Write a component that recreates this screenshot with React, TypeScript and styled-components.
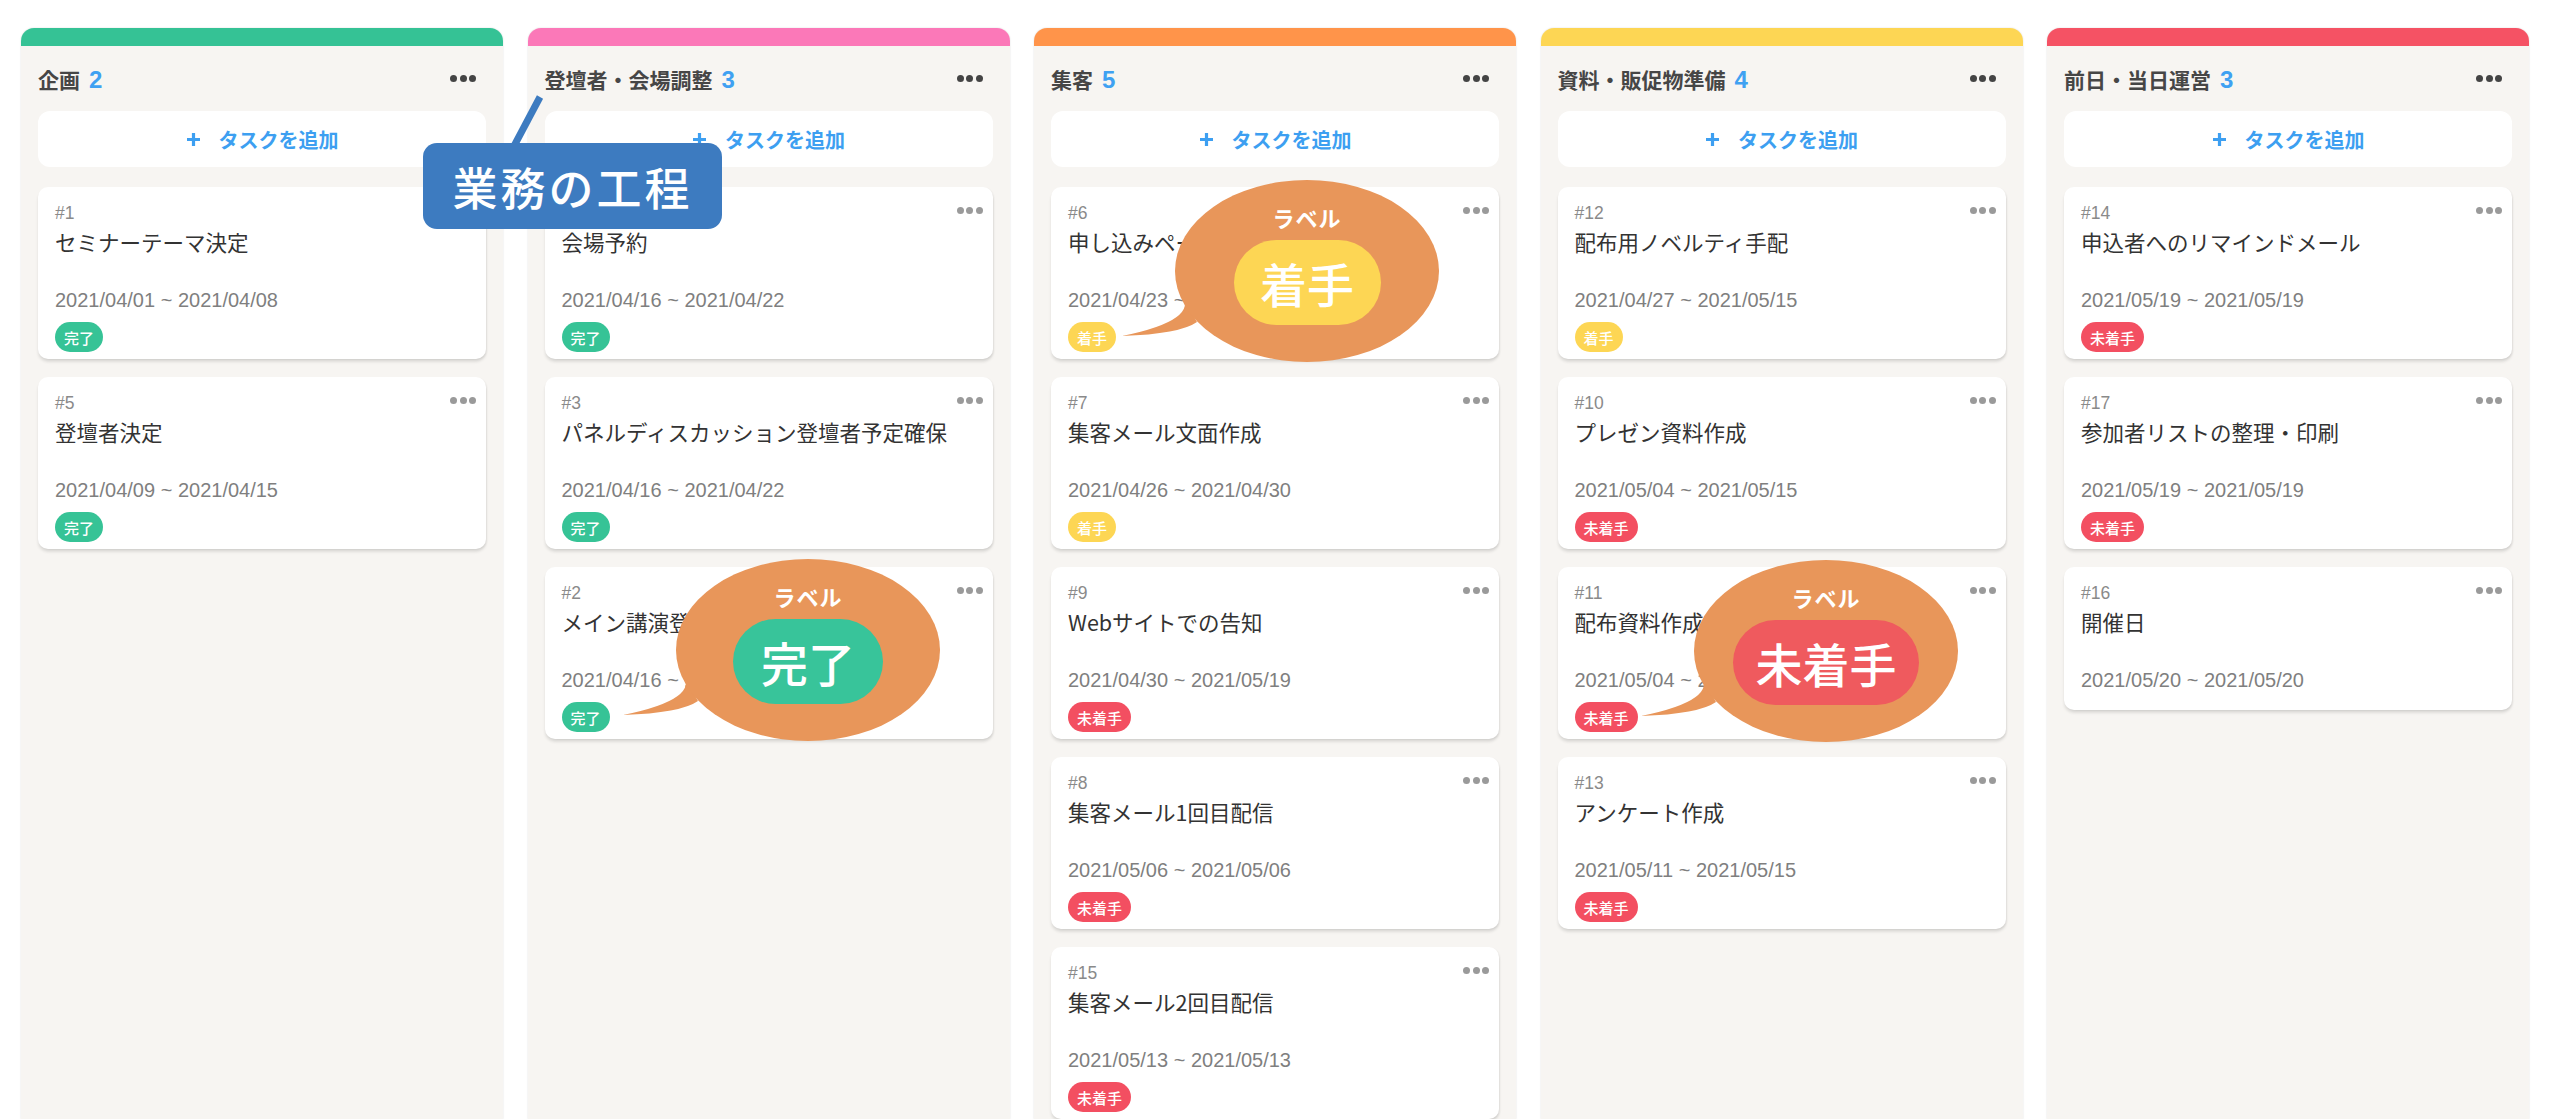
import styled, { createGlobalStyle } from "styled-components";

type Status = "done" | "doing" | "todo";

type Task = {
  no: number;
  title: string;
  date: string;
  status?: Status;
};

type Column = {
  title: string;
  color: string;
  tasks: Task[];
};

const statusColors: Record<Status, string> = {
  done: "#36c396",
  doing: "#fdd654",
  todo: "#f34f61",
};

const statusText: Record<Status, string> = {
  done: "完了",
  doing: "着手",
  todo: "未着手",
};

const columns: Column[] = [
  {
    title: "企画",
    color: "#35c295",
    tasks: [
      { no: 1, title: "セミナーテーマ決定", date: "2021/04/01 ~ 2021/04/08", status: "done" },
      { no: 5, title: "登壇者決定", date: "2021/04/09 ~ 2021/04/15", status: "done" },
    ],
  },
  {
    title: "登壇者・会場調整",
    color: "#fb78b8",
    tasks: [
      { no: 4, title: "会場予約", date: "2021/04/16 ~ 2021/04/22", status: "done" },
      { no: 3, title: "パネルディスカッション登壇者予定確保", date: "2021/04/16 ~ 2021/04/22", status: "done" },
      { no: 2, title: "メイン講演登壇者決定", date: "2021/04/16 ~ 2021/04/22", status: "done" },
    ],
  },
  {
    title: "集客",
    color: "#ff944a",
    tasks: [
      { no: 6, title: "申し込みページ作成", date: "2021/04/23 ~ 2021/04/29", status: "doing" },
      { no: 7, title: "集客メール文面作成", date: "2021/04/26 ~ 2021/04/30", status: "doing" },
      { no: 9, title: "Webサイトでの告知", date: "2021/04/30 ~ 2021/05/19", status: "todo" },
      { no: 8, title: "集客メール1回目配信", date: "2021/05/06 ~ 2021/05/06", status: "todo" },
      { no: 15, title: "集客メール2回目配信", date: "2021/05/13 ~ 2021/05/13", status: "todo" },
    ],
  },
  {
    title: "資料・販促物準備",
    color: "#fdd654",
    tasks: [
      { no: 12, title: "配布用ノベルティ手配", date: "2021/04/27 ~ 2021/05/15", status: "doing" },
      { no: 10, title: "プレゼン資料作成", date: "2021/05/04 ~ 2021/05/15", status: "todo" },
      { no: 11, title: "配布資料作成", date: "2021/05/04 ~ 2021/05/15", status: "todo" },
      { no: 13, title: "アンケート作成", date: "2021/05/11 ~ 2021/05/15", status: "todo" },
    ],
  },
  {
    title: "前日・当日運営",
    color: "#f55264",
    tasks: [
      { no: 14, title: "申込者へのリマインドメール", date: "2021/05/19 ~ 2021/05/19", status: "todo" },
      { no: 17, title: "参加者リストの整理・印刷", date: "2021/05/19 ~ 2021/05/19", status: "todo" },
      { no: 16, title: "開催日", date: "2021/05/20 ~ 2021/05/20" },
    ],
  },
];

const GlobalStyle = createGlobalStyle`
  html, body {
    margin: 0;
    padding: 0;
    background: #ffffff;
  }
  body {
    font-family: "Liberation Sans", "Noto Sans CJK JP", sans-serif;
    color: #333;
  }
  * {
    box-sizing: border-box;
  }
`;

const Page = styled.div`
  position: relative;
  width: 2550px;
  height: 1119px;
  overflow: hidden;
`;

const Board = styled.div`
  display: flex;
  gap: 24.5px;
  height: 100%;
  padding: 28px 19px 0 21px;
`;

const Lane = styled.section`
  flex: 0 0 482px;
  display: flex;
  flex-direction: column;
  background: #f7f5f2;
  border-radius: 13px 13px 0 0;
  box-shadow: 0 0 2px rgba(0, 0, 0, 0.14);
`;

const LaneBar = styled.div<{ $color: string }>`
  height: 18px;
  flex: none;
  background: ${(p) => p.$color};
  border-radius: 13px 13px 0 0;
`;

const LaneHeader = styled.header`
  height: 65px;
  flex: none;
  display: flex;
  align-items: center;
  justify-content: space-between;
  padding: 0 27px 0 17px;
`;

const LaneTitle = styled.h2`
  margin: 0;
  font-family: "Noto Sans CJK JP", sans-serif;
  font-size: 21px;
  font-weight: 700;
  color: #464646;
  display: flex;
  align-items: baseline;
  gap: 9px;
`;

const Count = styled.span`
  font-family: "Liberation Sans", sans-serif;
  font-size: 24px;
  font-weight: 700;
  color: #3fa1f2;
`;

const Dots = styled.div<{ $color: string }>`
  display: flex;
  gap: 2.5px;
  span {
    width: 7px;
    height: 7px;
    border-radius: 50%;
    background: ${(p) => p.$color};
  }
`;

const AddButton = styled.button`
  flex: none;
  margin: 0 17px;
  height: 56px;
  border: none;
  border-radius: 12px;
  background: #ffffff;
  display: flex;
  align-items: center;
  justify-content: center;
  gap: 18px;
  color: #3d9ff1;
  font-family: "Noto Sans CJK JP", sans-serif;
  font-size: 20px;
  font-weight: 700;
  cursor: pointer;
`;

const CardList = styled.div`
  display: flex;
  flex-direction: column;
  gap: 18px;
  padding: 20px 17px 0;
`;

const Card = styled.article<{ $compact: boolean }>`
  position: relative;
  background: #ffffff;
  border-radius: 10px;
  box-shadow: 0 3px 3px rgba(0, 0, 0, 0.1), 1px 1px 2px rgba(0, 0, 0, 0.06);
  padding: 16px 17px ${(p) => (p.$compact ? "18px" : "7px")};
`;

const CardMenu = styled.div`
  position: absolute;
  top: 20px;
  right: 10px;
`;

const TaskNo = styled.div`
  font-size: 17.5px;
  line-height: 20px;
  color: #8a8a8a;
`;

const TaskTitle = styled.div`
  margin-top: 4px;
  font-family: "Noto Sans CJK JP", sans-serif;
  font-size: 21.5px;
  line-height: 30px;
  color: #333333;
`;

const TaskDate = styled.div`
  margin-top: 31px;
  font-size: 20px;
  line-height: 24px;
  color: #7f7f7f;
`;

const Badge = styled.span<{ $color: string }>`
  display: inline-flex;
  align-items: center;
  margin-top: 10px;
  height: 30px;
  padding: 0 9px;
  border-radius: 15px;
  background: ${(p) => p.$color};
  color: #ffffff;
  font-family: "Noto Sans CJK JP", sans-serif;
  font-size: 15px;
  font-weight: 500;
`;

const Callout = styled.div`
  position: absolute;
  left: 423px;
  top: 143px;
  width: 299px;
  height: 86px;
  border-radius: 14px;
  background: #3d7bc0;
  display: flex;
  align-items: center;
  justify-content: center;
  color: #ffffff;
  font-family: "Noto Sans CJK JP", sans-serif;
  font-size: 45px;
  font-weight: 500;
  letter-spacing: 3px;
  svg {
    position: absolute;
    left: 80px;
    top: -50px;
  }
`;

const Bubble = styled.div`
  position: absolute;
  width: 264px;
  height: 182px;
  display: flex;
  flex-direction: column;
  align-items: center;
  padding-top: 22px;
  svg {
    position: absolute;
    left: 0;
    top: 0;
    overflow: visible;
  }
`;

const BubbleLabel = styled.div`
  position: relative;
  font-family: "Noto Sans CJK JP", sans-serif;
  font-size: 22px;
  line-height: 30px;
  font-weight: 700;
  color: #ffffff;
  letter-spacing: 1px;
`;

const BubblePill = styled.div<{ $color: string; $width: number }>`
  position: relative;
  margin-top: 8px;
  width: ${(p) => p.$width}px;
  height: 85px;
  border-radius: 43px;
  background: ${(p) => p.$color};
  display: flex;
  align-items: center;
  justify-content: center;
  color: #ffffff;
  font-family: "Noto Sans CJK JP", sans-serif;
  font-size: 47px;
  font-weight: 500;
`;

function MenuDots({ color }: { color: string }) {
  return (
    <Dots $color={color}>
      <span />
      <span />
      <span />
    </Dots>
  );
}

function LabelBubble({
  cx,
  cy,
  text,
  color,
  width,
}: {
  cx: number;
  cy: number;
  text: string;
  color: string;
  width: number;
}) {
  // ellipse centred in a 264x182 box, tail pointing down-left
  return (
    <Bubble style={{ left: cx - 132, top: cy - 91 }}>
      <svg width="264" height="182" viewBox="0 0 264 182">
        <path d="M 6 113 Q 26 140 -53 156 Q 5 154 22 142 Z" fill="#e8965a" />
        <ellipse cx="132" cy="91" rx="132" ry="91" fill="#e8965a" />
      </svg>
      <BubbleLabel>ラベル</BubbleLabel>
      <BubblePill $color={color} $width={width}>
        {text}
      </BubblePill>
    </Bubble>
  );
}

export default function App() {
  return (
    <Page>
      <GlobalStyle />
      <Board>
        {columns.map((col) => (
          <Lane key={col.title}>
            <LaneBar $color={col.color} />
            <LaneHeader>
              <LaneTitle>
                {col.title}
                <Count>{col.tasks.length}</Count>
              </LaneTitle>
              <MenuDots color="#444444" />
            </LaneHeader>
            <AddButton>
              <svg width="15" height="15" viewBox="0 0 15 15">
                <path d="M7.5 1v13M1 7.5h13" stroke="#3d9ff1" strokeWidth="3.2" />
              </svg>
              タスクを追加
            </AddButton>
            <CardList>
              {col.tasks.map((t) => (
                <Card key={t.no} $compact={!t.status}>
                  <CardMenu>
                    <MenuDots color="#9a9a9a" />
                  </CardMenu>
                  <TaskNo>#{t.no}</TaskNo>
                  <TaskTitle>{t.title}</TaskTitle>
                  <TaskDate>{t.date}</TaskDate>
                  {t.status && (
                    <Badge $color={statusColors[t.status]}>{statusText[t.status]}</Badge>
                  )}
                </Card>
              ))}
            </CardList>
          </Lane>
        ))}
      </Board>

      <Callout>
        <svg width="45" height="55" viewBox="0 0 45 55">
          <line x1="37" y1="4" x2="10" y2="55" stroke="#3d7bc0" strokeWidth="7" />
        </svg>
        業務の工程
      </Callout>

      <LabelBubble cx={808} cy={650} text="完了" color="#38c49a" width={150} />
      <LabelBubble cx={1307} cy={271} text="着手" color="#fdd654" width={147} />
      <LabelBubble cx={1826} cy={651} text="未着手" color="#ef5a5e" width={186} />
    </Page>
  );
}
